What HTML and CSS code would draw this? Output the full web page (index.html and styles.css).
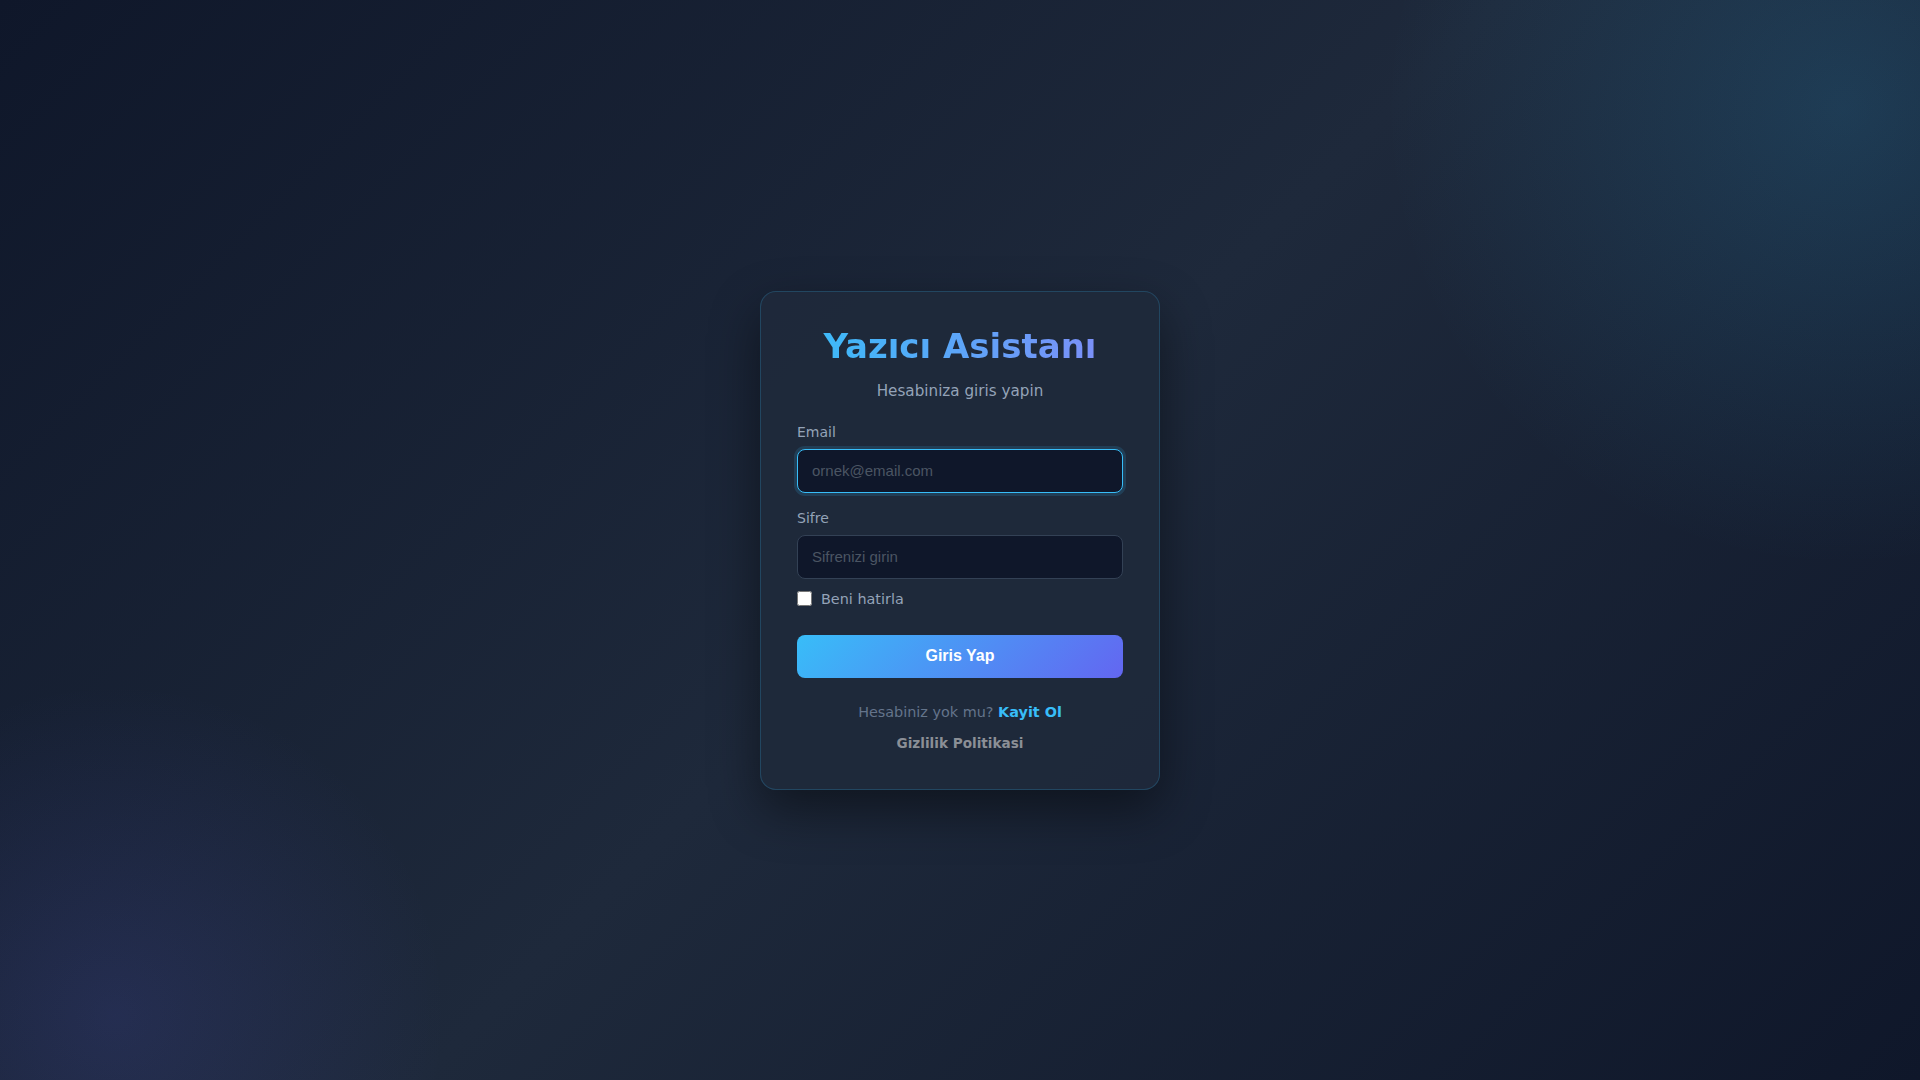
FILE: index.html
```html
<!DOCTYPE html>
<html lang="tr">
<head>
    <meta charset="UTF-8">
    <meta name="viewport" content="width=device-width, initial-scale=1.0">
    <title>Yazıcı Asistanı - Giris</title>
    <link rel="stylesheet" href="styles.css">
</head>
<body>
    <div class="login-card">
        <h1 class="title">Yazıcı Asistanı</h1>
        <p class="subtitle">Hesabiniza giris yapin</p>

        <form class="login-form" onsubmit="return false;">
            <div class="form-group">
                <label for="email">Email</label>
                <input type="email" id="email" class="focused" placeholder="ornek@email.com">
            </div>
            <div class="form-group">
                <label for="password">Sifre</label>
                <input type="password" id="password" placeholder="Sifrenizi girin">
            </div>
            <div class="remember">
                <input type="checkbox" id="remember">
                <label for="remember">Beni hatirla</label>
            </div>
            <button type="submit" class="btn-login">Giris Yap</button>
        </form>

        <p class="register">Hesabiniz yok mu? <a href="#">Kayit Ol</a></p>
        <p class="privacy"><a href="#">Gizlilik Politikasi</a></p>
    </div>
</body>
</html>
```

FILE: styles.css
```css
* {
    box-sizing: border-box;
}
html, body {
    height: 100%;
}
body {
    margin: 0;
    font-family: "DejaVu Sans", sans-serif;
    color: #cbd5e1;
    background:
        radial-gradient(circle at 96% 10%, rgba(56, 189, 248, 0.16), transparent 22%),
        radial-gradient(circle at 6% 94%, rgba(99, 102, 241, 0.14), transparent 16%),
        linear-gradient(135deg, #0f172a 0%, #1e293b 50%, #0f172a 100%);
    display: flex;
    align-items: center;
    justify-content: center;
}
.login-card {
    width: 400px;
    padding: 34px 36px 38px;
    background: rgba(30, 41, 59, 0.92);
    border: 1px solid rgba(56, 189, 248, 0.2);
    border-radius: 16px;
    box-shadow: 0 20px 50px rgba(0, 0, 0, 0.45);
    text-align: center;
}
.title {
    margin: 0;
    font-size: 34px;
    font-weight: bold;
    background: linear-gradient(90deg, #38bdf8, #818cf8);
    -webkit-background-clip: text;
    background-clip: text;
    color: transparent;
}
.subtitle {
    margin: 16px 0 24px;
    font-size: 15.2px;
    color: #94a3b8;
}
.login-form {
    text-align: left;
}
.form-group {
    margin-bottom: 17px;
}
.form-group label {
    display: block;
    margin-bottom: 9px;
    font-size: 14px;
    color: #94a3b8;
}
.form-group input {
    width: 100%;
    height: 44px;
    padding: 0 14px;
    font-family: "Liberation Sans", Arial, sans-serif;
    font-size: 15px;
    color: #e2e8f0;
    background: #0f172a;
    border: 1px solid #334155;
    border-radius: 8px;
    outline: none;
}
.form-group input::placeholder {
    color: #4b5563;
}
.form-group input.focused,
.form-group input:focus {
    border-color: #38bdf8;
    box-shadow: 0 0 0 3px rgba(56, 189, 248, 0.15);
}
.remember {
    display: flex;
    align-items: center;
    gap: 9px;
    margin-top: -5px;
    font-size: 14.4px;
    color: #94a3b8;
}
.remember input {
    width: 15px;
    height: 15px;
    margin: 0;
}
.btn-login {
    display: block;
    width: 100%;
    height: 43px;
    margin-top: 28px;
    font-family: "Liberation Sans", Arial, sans-serif;
    font-size: 16px;
    font-weight: bold;
    color: #fff;
    background: linear-gradient(135deg, #38bdf8, #6366f1);
    border: none;
    border-radius: 8px;
    cursor: pointer;
}
.register {
    margin: 26px 0 0;
    font-size: 14.4px;
    color: #64748b;
}
.register a {
    color: #38bdf8;
    font-weight: bold;
    text-decoration: none;
}
.privacy {
    margin: 15px 0 0;
    font-size: 13.6px;
}
.privacy a {
    color: #8b8f96;
    font-weight: bold;
    text-decoration: none;
}
```
